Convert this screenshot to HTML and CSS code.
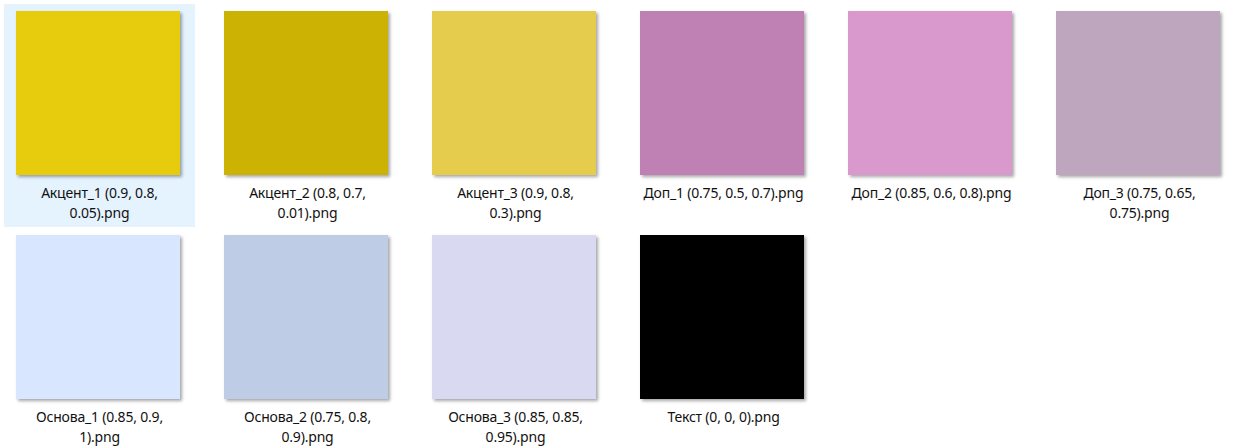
FILE: index.html
```html
<!DOCTYPE html>
<html lang="ru">
<head>
    <meta charset="UTF-8">
    <title>Палитра</title>
    <link rel="stylesheet" href="styles.css">
</head>
<body>
<div class="file-grid">
    <div class="file-item hover">
        <div class="thumb" style="background-color: rgb(230, 204, 13);"></div>
        <div class="file-name">Акцент_1 (0.9, 0.8,<br>0.05).png</div>
    </div>
    <div class="file-item">
        <div class="thumb" style="background-color: rgb(204, 179, 3);"></div>
        <div class="file-name">Акцент_2 (0.8, 0.7,<br>0.01).png</div>
    </div>
    <div class="file-item">
        <div class="thumb" style="background-color: rgb(230, 204, 77);"></div>
        <div class="file-name">Акцент_3 (0.9, 0.8,<br>0.3).png</div>
    </div>
    <div class="file-item">
        <div class="thumb" style="background-color: rgb(191, 128, 179);"></div>
        <div class="file-name">Доп_1 (0.75, 0.5, 0.7).png</div>
    </div>
    <div class="file-item">
        <div class="thumb" style="background-color: rgb(217, 153, 204);"></div>
        <div class="file-name">Доп_2 (0.85, 0.6, 0.8).png</div>
    </div>
    <div class="file-item">
        <div class="thumb" style="background-color: rgb(191, 166, 191);"></div>
        <div class="file-name">Доп_3 (0.75, 0.65,<br>0.75).png</div>
    </div>
    <div class="file-item">
        <div class="thumb" style="background-color: rgb(217, 230, 255);"></div>
        <div class="file-name">Основа_1 (0.85, 0.9,<br>1).png</div>
    </div>
    <div class="file-item">
        <div class="thumb" style="background-color: rgb(191, 204, 230);"></div>
        <div class="file-name">Основа_2 (0.75, 0.8,<br>0.9).png</div>
    </div>
    <div class="file-item">
        <div class="thumb" style="background-color: rgb(217, 217, 242);"></div>
        <div class="file-name">Основа_3 (0.85, 0.85,<br>0.95).png</div>
    </div>
    <div class="file-item">
        <div class="thumb" style="background-color: rgb(0, 0, 0);"></div>
        <div class="file-name">Текст (0, 0, 0).png</div>
    </div>
</div>
</body>
</html>
```

FILE: styles.css
```css
body {
    margin: 0;
    background-color: #ffffff;
    font-family: "Noto Sans", "Open Sans", sans-serif;
    overflow: hidden;
}
.file-grid {
    display: grid;
    grid-template-columns: repeat(6, 191px);
    grid-auto-rows: 223px;
    column-gap: 17px;
    row-gap: 1px;
    padding: 4px 0 0 4px;
}
.file-item {
    display: flex;
    flex-direction: column;
    align-items: center;
    padding-top: 7px;
    box-sizing: border-box;
}
.file-item.hover {
    background-color: #e5f3ff;
}
.thumb {
    width: 164px;
    height: 164px;
    margin-right: 3px; /* thumbnail sits a bit left of centre */
    box-shadow: 2px 2px 3px rgba(0, 0, 0, 0.35);
}
.file-name {
    margin-top: 8px;
    font-size: 14px;
    line-height: 20px;
    letter-spacing: -0.2px;
    color: #111111;
    text-align: center;
    white-space: nowrap;
}
```
